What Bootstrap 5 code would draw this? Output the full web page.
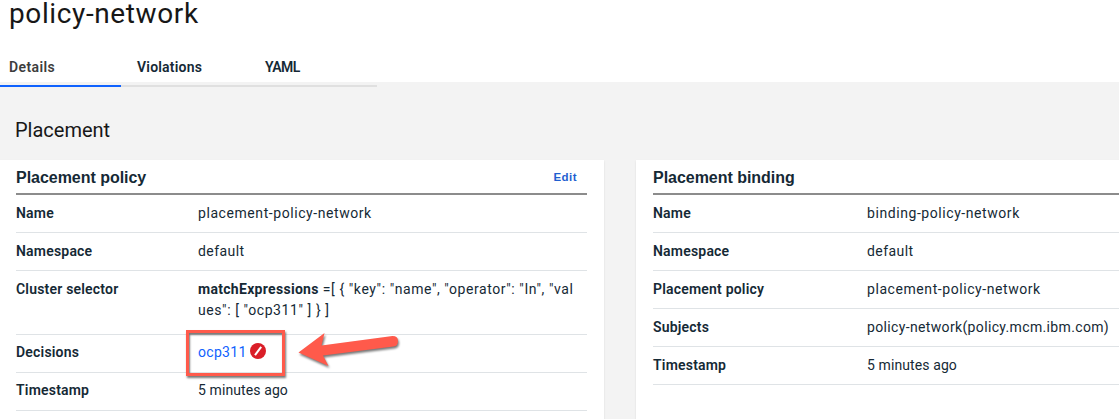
<!DOCTYPE html>
<html lang="en">
<head>
<meta charset="utf-8">
<meta name="viewport" content="width=device-width, initial-scale=1">
<title>policy-network</title>
<link href="https://cdn.jsdelivr.net/npm/bootstrap@5.3.0/dist/css/bootstrap.min.css" rel="stylesheet">
<style>
body{font-family:Roboto,"Liberation Sans",sans-serif;font-size:14px;line-height:21px;color:#152935;background:#f3f3f3;height:419px;overflow:hidden;letter-spacing:.45px}
.page-head{height:82px;padding-left:9px;background:#fff}
.page-head h1{font-size:28px;line-height:28px;font-weight:400;color:#171717;letter-spacing:.62px}
.tabs{height:36px;margin:23px 0 0 -16px}
.tabs .nav-link{width:128px;height:36px;padding:6px 16px 0;font-weight:600;color:#152935;letter-spacing:.2px;border-bottom:2px solid #e0e0e0}
.tabs .nav-link.active{color:#3d3d3d;border-color:#0f62fe;letter-spacing:.4px}
.tabs .nav-link:last-child{letter-spacing:-.5px}
.section-title{font-size:20px;line-height:26px;font-weight:400;color:#171717;letter-spacing:0;margin:35px 0 17px 15px}
.panel{background:#fff;height:270px;box-shadow:0 1px 2px rgba(0,0,0,.1)}
.panel-a{width:604px;padding:0 17px 0 16px}
.panel-b{width:500px;padding:0 0 0 17px}
.panel-head{height:35px;border-bottom:2px solid #8c8c8c}
.panel-head h2{font:bold 16px/24px "Liberation Sans",sans-serif;letter-spacing:-.03px;margin:6px 0 0}
.edit{font:bold 11.5px/16px "Liberation Sans",sans-serif;color:#1f5fd0;margin:9px 10px 0 0}
.item{height:38px;padding-top:8px;border-bottom:1px solid #dfe3e6}
.item.tall{height:64px}
.item.tall ~ .item{padding-top:7px}
.item dt{font-weight:600;width:182px;letter-spacing:.2px}
.panel-b .item dt{width:214px}
.item dd{margin:0;white-space:nowrap}
.name-text{letter-spacing:.57px}
.subject-text{letter-spacing:.35px}
.time-text{letter-spacing:.1px}
.selector-text{letter-spacing:.58px}
.selector-text b{letter-spacing:.3px}
.status-link{color:#1062fe;letter-spacing:.3px}
.status-icon{margin:1px 0 0 3px}
.callout-box{left:-12px;top:-12px;width:99px;height:46px;border:3.500px solid #ff5a4b;box-shadow:1px 2px 2px #777,inset 1px 2px 2px #777;z-index:2}
.callout-arrow{left:94px;top:-13px;z-index:2}
.callout-arrow path{fill:#ff5a4b;filter:drop-shadow(1px 2px 1px #777)}
</style>
<script src="https://cdn.jsdelivr.net/npm/bootstrap@5.3.0/dist/js/bootstrap.bundle.min.js"></script>
</head>
<body>
<header class="page-head d-flex flex-column">
  <h1 class="mb-0">policy-network</h1>
  <nav class="nav tabs flex-nowrap">
    <a class="nav-link active" href="#">Details</a>
    <a class="nav-link" href="#">Violations</a>
    <a class="nav-link" href="#">YAML</a>
  </nav>
</header>
<main class="d-flex flex-column">
  <h3 class="section-title">Placement</h3>
  <div class="d-flex" style="gap:32px">
    <section class="panel panel-a flex-shrink-0">
      <div class="panel-head d-flex justify-content-between"><h2>Placement policy</h2><a class="edit text-decoration-none" href="#">Edit</a></div>
      <dl class="mb-0">
        <div class="item d-flex"><dt>Name</dt><dd class="name-text">placement-policy-network</dd></div>
        <div class="item d-flex"><dt>Namespace</dt><dd>default</dd></div>
        <div class="item tall d-flex"><dt>Cluster selector</dt><dd class="selector-text"><b>matchExpressions</b> =[ { "key": "name", "operator": "In", "val<br>ues": [ "ocp311" ] } ]</dd></div>
        <div class="item d-flex"><dt>Decisions</dt><dd class="position-relative d-flex"><a class="status-link text-decoration-none" href="#">ocp311</a>
          <svg class="status-icon" width="16" height="16" viewBox="0 0 16 16"><circle cx="8" cy="8" r="8" fill="#da1e28"/><path d="M5 12.200 11.200 3.800" stroke="#fff" stroke-width="2"/></svg>
          <span class="callout-box position-absolute"></span>
          <svg class="callout-arrow position-absolute" width="112" height="60" viewBox="292 329 112 60"><path d="M298.500 352.500 324.500 333 321.500 345.500 392.500 336Q398 336 398 341T393.500 346.500L323 355.500 328.500 366Z"/></svg>
        </dd></div>
        <div class="item d-flex"><dt>Timestamp</dt><dd class="time-text">5 minutes ago</dd></div>
      </dl>
    </section>
    <section class="panel panel-b flex-shrink-0">
      <div class="panel-head"><h2 class="d-inline-block">Placement binding</h2></div>
      <dl class="mb-0">
        <div class="item d-flex"><dt>Name</dt><dd class="name-text">binding-policy-network</dd></div>
        <div class="item d-flex"><dt>Namespace</dt><dd>default</dd></div>
        <div class="item d-flex"><dt>Placement policy</dt><dd class="name-text">placement-policy-network</dd></div>
        <div class="item d-flex"><dt>Subjects</dt><dd class="subject-text">policy-network(policy.mcm.ibm.com)</dd></div>
        <div class="item d-flex"><dt>Timestamp</dt><dd class="time-text">5 minutes ago</dd></div>
      </dl>
    </section>
  </div>
</main>
</body>
</html>
